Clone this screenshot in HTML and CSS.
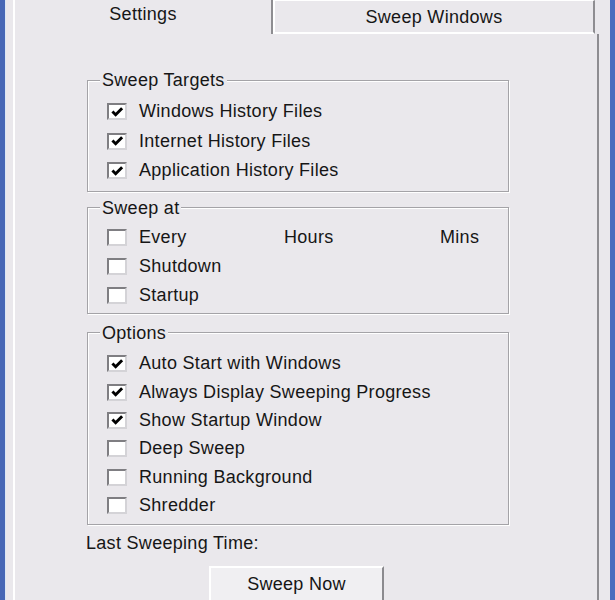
FILE: index.html
```html
<!DOCTYPE html>
<html lang="en">
<head>
    <meta charset="UTF-8">
    <title>Sweeper Settings</title>
    <link rel="stylesheet" href="styles.css">
</head>
<body>
    <div class="window">
        <!-- Tab headers -->
        <div class="tab-strip">
            <div class="tab tab-active">Settings</div>
            <div class="tab tab-inactive">Sweep Windows</div>
        </div>

        <!-- Settings page -->
        <div class="panel">
            <fieldset class="group group-targets">
                <legend>Sweep Targets</legend>
                <div class="row"><span class="box checked"><svg viewBox="0 0 16 13"><polyline points="2.5,6 6,9.5 13,2.5"/></svg></span>Windows History Files</div>
                <div class="row"><span class="box checked"><svg viewBox="0 0 16 13"><polyline points="2.5,6 6,9.5 13,2.5"/></svg></span>Internet History Files</div>
                <div class="row"><span class="box checked"><svg viewBox="0 0 16 13"><polyline points="2.5,6 6,9.5 13,2.5"/></svg></span>Application History Files</div>
            </fieldset>

            <fieldset class="group group-at">
                <legend>Sweep at</legend>
                <div class="row">
                    <span class="box"></span>
                    <span class="every-label">Every</span>
                    <span class="unit-hours">Hours</span>
                    <span class="unit-mins">Mins</span>
                </div>
                <div class="row"><span class="box"></span>Shutdown</div>
                <div class="row"><span class="box"></span>Startup</div>
            </fieldset>

            <fieldset class="group group-options">
                <legend>Options</legend>
                <div class="row"><span class="box checked"><svg viewBox="0 0 16 13"><polyline points="2.5,6 6,9.5 13,2.5"/></svg></span>Auto Start with Windows</div>
                <div class="row"><span class="box checked"><svg viewBox="0 0 16 13"><polyline points="2.5,6 6,9.5 13,2.5"/></svg></span>Always Display Sweeping Progress</div>
                <div class="row"><span class="box checked"><svg viewBox="0 0 16 13"><polyline points="2.5,6 6,9.5 13,2.5"/></svg></span>Show Startup Window</div>
                <div class="row"><span class="box"></span>Deep Sweep</div>
                <div class="row"><span class="box"></span>Running Background</div>
                <div class="row"><span class="box"></span>Shredder</div>
            </fieldset>

            <div class="last-time">Last Sweeping Time:</div>
            <button class="sweep-btn">Sweep Now</button>
        </div>
    </div>
</body>
</html>
```
FILE: styles.css
```css
/* General */
body {
    margin: 0;
    background-color: #eae8ec;
    color: #161616;
    font-family: "Liberation Sans", Arial, sans-serif;
    font-size: 18px;
    letter-spacing: 0.3px;
    overflow: hidden;
}

/* Window frame with the blue XP edges */
.window {
    width: 615px;
    height: 600px;
    box-sizing: border-box;
    border-left: 5px solid #4767b6;
    border-right: 5px solid #4a6cbe;
    box-shadow: inset 1px 0 0 #dbe7f5;
    padding: 0 11px 0 8px;
}

/* Tabs */
.tab-strip {
    display: flex;
    height: 34px;
}

.tab {
    box-sizing: border-box;
    text-align: center;
    line-height: 20px;
}

.tab-active {
    width: 260px;
    border-left: 2px solid #ffffff;
    border-right: 2px solid #8e8d91;
    padding-top: 4px;
}

.tab-inactive {
    width: 322px;
    height: 34px;
    border-top: 1px solid #ffffff;
    border-left: 2px solid #ffffff;
    border-right: 2px solid #8e8d91;
    border-bottom: 2px solid #ffffff;
    padding-top: 6px;
}

/* Tab page */
.panel {
    height: 566px;
    box-sizing: border-box;
    border-left: 2px solid #ffffff;
    border-right: 2px solid #8e8d91;
    padding: 36px 0 0 72px;
}

/* Group boxes */
.group {
    width: 422px;
    box-sizing: border-box;
    margin: 0;
    padding: 7px 0 5px 0;
    border: 1px solid #a4a3a7;
    box-shadow: inset 1px 1px 0 #ffffff, 1px 1px 0 #ffffff;
    min-inline-size: 0;
}

.group legend {
    margin-left: 12px;
    padding: 0 2px;
    line-height: 20px;
    background-color: #eae8ec;
}

.group-at {
    margin-top: 6px;
    padding: 5px 0 3px 0;
}

.group-options {
    margin-top: 9px;
    padding: 7px 0 4px 0;
}

.row {
    display: flex;
    align-items: center;
    height: 29px;
    padding-left: 19px;
}

.group-targets .row {
    height: 29.5px;
}

.group-options .row {
    height: 28.4px;
}

/* Checkboxes */
.box {
    width: 20px;
    height: 17px;
    box-sizing: border-box;
    flex: none;
    margin-right: 12px;
    border: 2px solid;
    border-color: #7f7e82 #d4d3d7 #d4d3d7 #7f7e82;
    background-color: #ffffff;
    display: flex;
    align-items: center;
    justify-content: center;
}

.box svg {
    width: 15px;
    height: 12px;
    fill: none;
    stroke: #000000;
    stroke-width: 3.2;
}

/* Sweep at units */
.every-label {
    width: 145px;
}

.unit-hours {
    width: 156px;
}

/* Bottom */
.last-time {
    margin: 8px 0 0 -1px;
    line-height: 20px;
}

.sweep-btn {
    display: block;
    width: 175px;
    height: 36px;
    margin: 13px 0 0 122px;
    padding: 2px 0 0 0;
    font-family: inherit;
    font-size: 18px;
    letter-spacing: 0.3px;
    color: #161616;
    background-color: #f0eff2;
    border: 2px solid;
    border-color: #ffffff #8b8a8e #8b8a8e #ffffff;
}
```
